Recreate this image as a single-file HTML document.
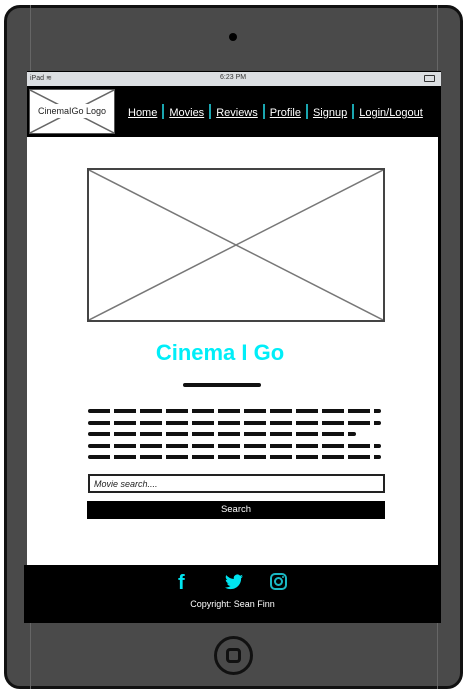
<!DOCTYPE html>
<html><head><meta charset="utf-8"><style>
*{margin:0;padding:0;box-sizing:border-box}
body{width:466px;height:692px;background:#fff;position:relative;overflow:hidden;font-family:"Liberation Sans",sans-serif}
.dev{position:absolute;left:4px;top:5px;width:459px;height:684px;background:#4a4a4a;border:3px solid #111;border-radius:16px}
.ab{position:absolute}
.scr{left:27px;top:71px;width:414px;height:552px;background:#000}
.status{left:27px;top:72px;width:414px;height:14px;background:#dcdfe2;font-size:7px;color:#333}
.nav a{color:#fff;font-size:11px;text-decoration:underline}
.sep{display:inline-block;width:2px;height:15px;background:#1aa6b0;vertical-align:middle;margin:0 5px}
.scrib{height:4px;background:repeating-linear-gradient(90deg,#111 0 22px,transparent 22px 26px);margin-bottom:7.5px;border-radius:2px}
</style></head><body>
<div class="dev"></div>
<div class="ab" style="left:30px;top:5px;width:1px;height:684px;background:#666"></div>
<div class="ab" style="left:437px;top:5px;width:1px;height:684px;background:#666"></div>
<div class="ab" style="left:229px;top:33px;width:8px;height:8px;border-radius:50%;background:#000"></div>
<div class="ab scr"></div>
<div class="ab status"><span style="position:absolute;left:3px;top:2px">iPad ≋</span><span style="position:absolute;left:193px;top:2px">6:23 PM</span><span style="position:absolute;right:6px;top:3px;width:11px;height:7px;border:1px solid #333;border-radius:1px"></span></div>
<div class="ab" style="left:29px;top:89px;width:86px;height:45px;background:#fff;border:1px solid #555">
<svg width="84" height="43" style="position:absolute;left:0;top:0"><line x1="0" y1="0" x2="84" y2="43" stroke="#666" stroke-width="1.5"/><line x1="84" y1="0" x2="0" y2="43" stroke="#666" stroke-width="1.5"/></svg>
<div style="position:absolute;left:4px;top:14px;width:76px;height:14px;background:#fff;border-radius:3px;font-size:9px;text-align:center;line-height:14px;color:#222">CinemaIGo Logo</div></div>
<div class="ab nav" style="left:128px;top:103px;white-space:nowrap"><a>Home</a><span class="sep"></span><a>Movies</a><span class="sep"></span><a>Reviews</a><span class="sep"></span><a>Profile</a><span class="sep"></span><a>Signup</a><span class="sep"></span><a>Login/Logout</a></div>
<div class="ab" style="left:27px;top:137px;width:411px;height:428px;background:#fff"></div>
<div class="ab" style="left:87px;top:168px;width:298px;height:154px;border:2px solid #444">
<svg width="294" height="150" style="position:absolute;left:0;top:0"><line x1="0" y1="0" x2="294" y2="150" stroke="#777" stroke-width="1.5"/><line x1="294" y1="0" x2="0" y2="150" stroke="#777" stroke-width="1.5"/></svg></div>
<div class="ab" style="left:120px;top:340px;width:200px;text-align:center;color:#00eef8;font-size:22px;font-weight:bold">Cinema I Go</div>
<div class="ab" style="left:183px;top:383px;width:78px;height:4px;background:#111;border-radius:2px"></div>
<div class="ab" style="left:88px;top:409px;width:293px">
<div class="scrib"></div><div class="scrib"></div><div class="scrib" style="width:268px"></div><div class="scrib"></div><div class="scrib"></div></div>
<div class="ab" style="left:88px;top:474px;width:297px;height:19px;border:2px solid #222;font-size:9px;font-style:italic;padding:3px 4px;color:#222">Movie search....</div>
<div class="ab" style="left:87px;top:501px;width:298px;height:18px;background:#000;color:#fff;font-size:9.5px;text-align:center;line-height:18px">Search</div>
<div class="ab" style="left:24px;top:565px;width:417px;height:58px;background:#000"></div>
<div class="ab" style="left:178px;top:572px;color:#00e5f0;font-size:20px;font-weight:bold">f</div>
<svg class="ab" style="left:225px;top:574px" width="18" height="16" viewBox="0 0 24 20"><path fill="#00e5f0" d="M24 2.4a10 10 0 0 1-2.8.8A5 5 0 0 0 23.3.4a10 10 0 0 1-3.1 1.2A4.9 4.9 0 0 0 11.8 6 14 14 0 0 1 1.7.9a4.9 4.9 0 0 0 1.5 6.6A4.9 4.9 0 0 1 1 6.9a4.9 4.9 0 0 0 3.9 4.9 5 5 0 0 1-2.2.1 4.9 4.9 0 0 0 4.6 3.4A9.900 9.900 0 0 1 0 17.3 14 14 0 0 0 7.5 19.5c9 0 14-7.5 14-14v-.6A10 10 0 0 0 24 2.4z"/></svg>
<svg class="ab" style="left:270px;top:573px" width="17" height="17" viewBox="0 0 17 17"><rect x="1" y="1" width="15" height="15" rx="4" fill="none" stroke="#1ab8c4" stroke-width="2"/><circle cx="8.5" cy="8.5" r="3.5" fill="none" stroke="#1ab8c4" stroke-width="2"/><circle cx="13" cy="4" r="1" fill="#1ab8c4"/></svg>
<div class="ab" style="left:24px;top:599px;width:417px;text-align:center;color:#fff;font-size:9px">Copyright: Sean Finn</div>
<div class="ab" style="left:214px;top:636px;width:39px;height:39px;border:3px solid #111;border-radius:50%"></div>
<div class="ab" style="left:226px;top:648px;width:15px;height:15px;border:3px solid #111;border-radius:4px"></div>
</body></html>
